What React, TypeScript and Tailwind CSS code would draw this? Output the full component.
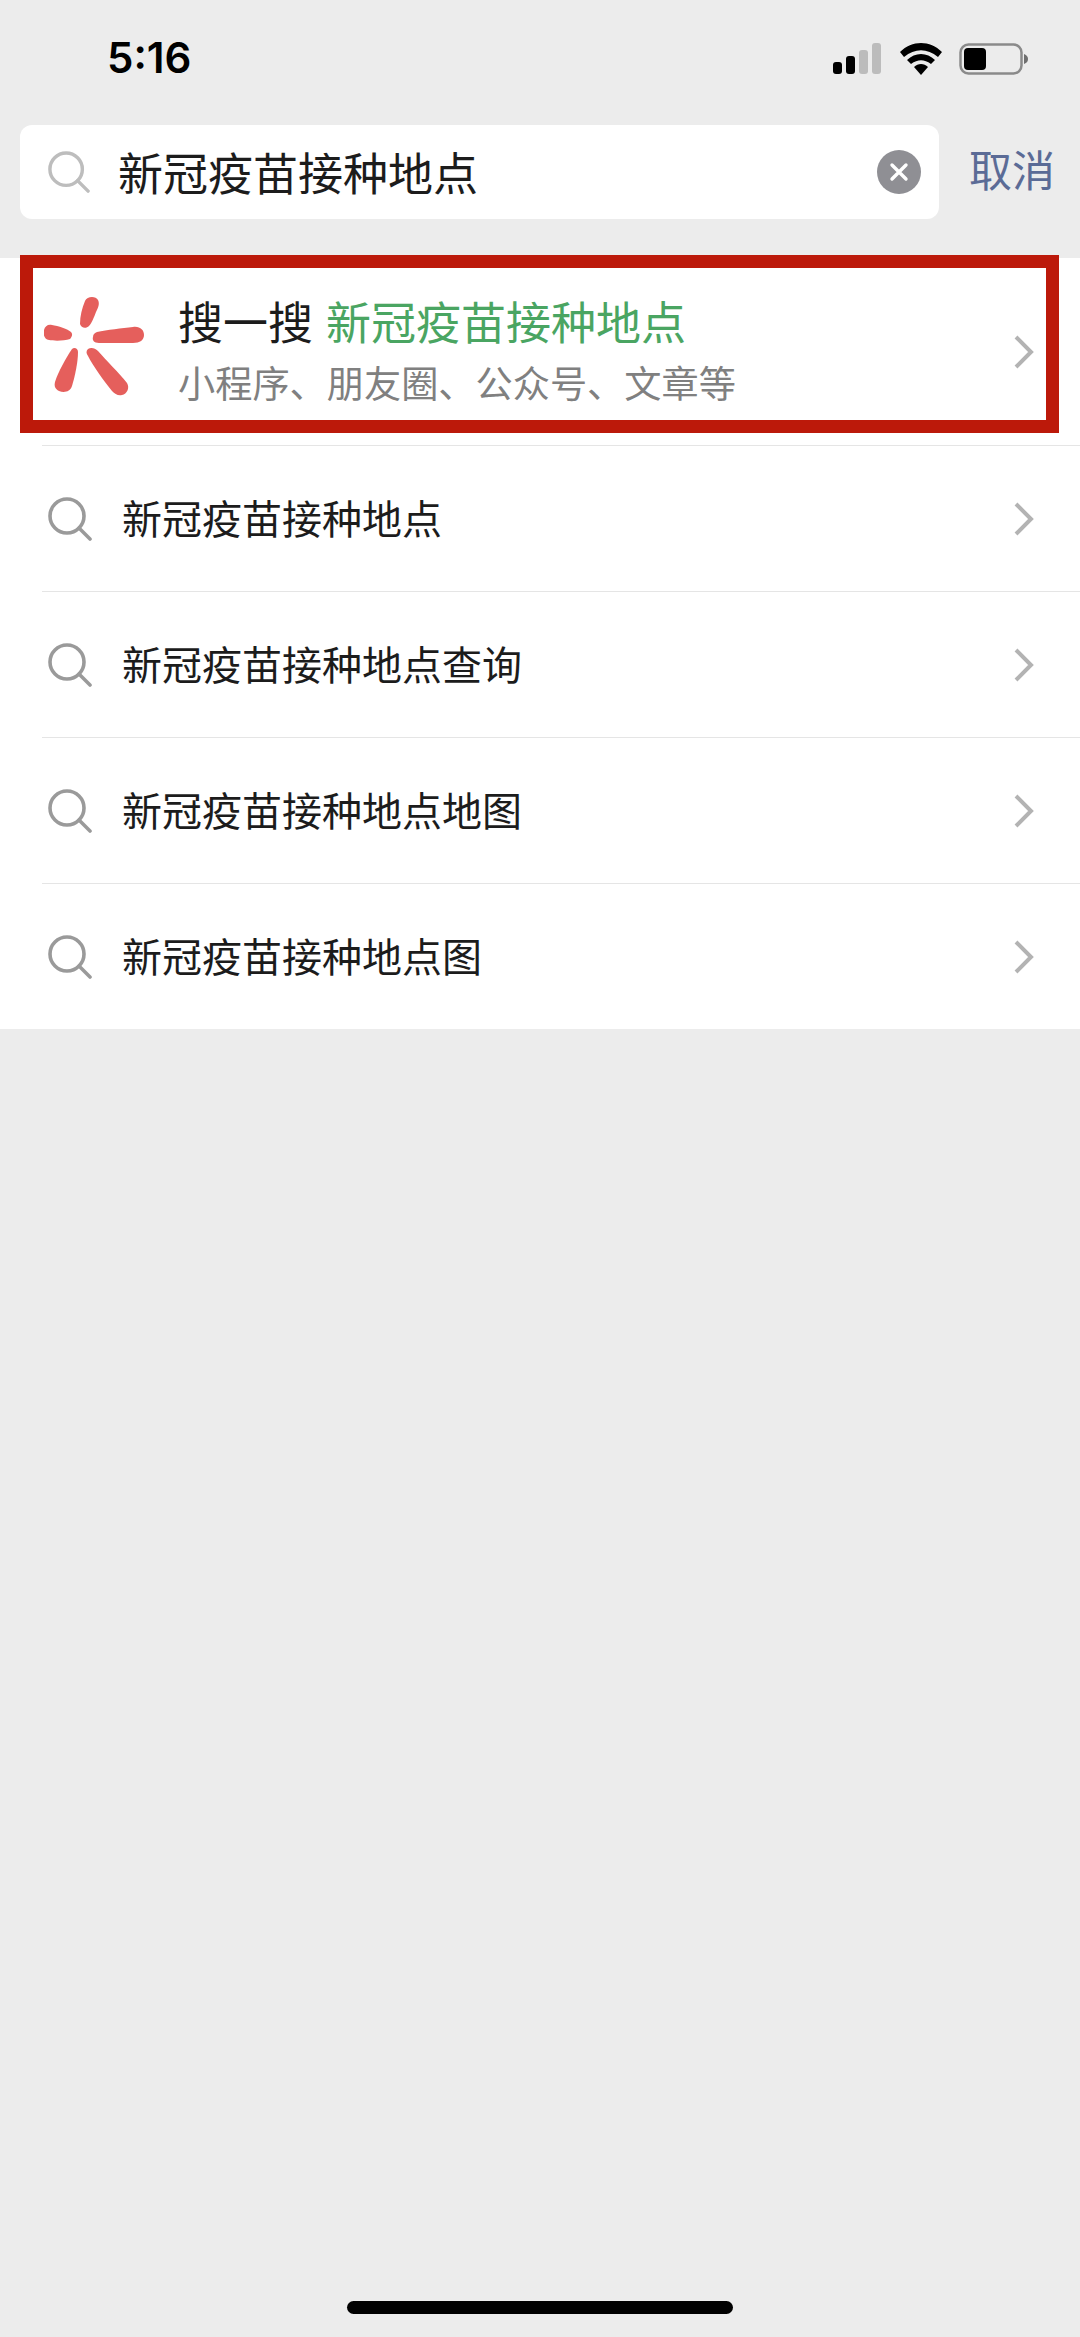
import React from 'react';

const FONT = 'font-["Noto_Sans_CJK_SC","Noto_Sans",sans-serif]';

const suggestions = ['新冠疫苗接种地点', '新冠疫苗接种地点查询', '新冠疫苗接种地点地图', '新冠疫苗接种地点图'];

const SearchIcon = ({ className, color }: { className: string; color: string }) => (
  <svg viewBox="0 0 44 44" className={className} fill="none" stroke={color}>
    <circle cx="19" cy="19" r="17" strokeWidth="3.6" />
    <path d="M31 31 L42 42" strokeWidth="3.6" strokeLinecap="round" />
  </svg>
);

const Chevron = () => (
  <svg viewBox="0 0 20 34" className="h-[34px] w-[20px]" fill="none" stroke="#b3b3b3" strokeWidth="4">
    <path d="M2 2 L17 17 L2 32" />
  </svg>
);

const Logo = () => (
  <svg viewBox="0 0 100 100" className="h-[100px] w-[100px]" fill="#e55f5c">
    <path d="M41 5 C43 0 52 0 54 4 C56 8 54 12 52 16 C50 21 48 27 45 30 C42 33 37 32 36 28 C36 20 38 12 41 5 Z" />
    <path d="M8 29 C14 30 24 33 27 36 C29 38 28 41 26 43 C20 45 10 45 5 44 C0 43 -1 38 0 34 C1 30 4 28 8 29 Z" />
    <path d="M53 36 C63 34 78 32 89 31 C96 30 100 34 100 39 C100 44 96 47 89 47 L55 47 C50 47 48 44 49 41 C49 38 51 37 53 36 Z" />
    <path d="M28 53 C30 51 34 52 34 56 C34 66 31 80 28 90 C26 96 20 97 15 95 C11 93 10 90 11 86 C14 76 22 62 28 53 Z" />
    <path d="M44 53 C47 51 51 52 54 55 C62 64 75 77 83 87 C86 92 83 98 78 99 C74 100 71 98 68 95 C60 85 49 70 44 60 C42 57 42 55 44 53 Z" />
  </svg>
);

export default function App() {
  return (
    <div className={`${FONT} relative h-[2337px] w-[1080px] overflow-hidden bg-[#ececec]`}>
      {/* status bar */}
      <div className="flex h-[125px] items-start justify-between pt-[34px] pl-[107px] pr-[51px]">
        <span className={'font-["Inter",sans-serif] text-[42px] leading-[48px] font-semibold text-black'}>5:16</span>
        <div className="mt-[9px] flex items-center">
          <svg viewBox="0 0 50 32" className="h-[32px] w-[50px]">
            <rect x="0" y="19" width="9" height="12" rx="3" fill="#000" />
            <rect x="13" y="13" width="9" height="18" rx="3" fill="#000" />
            <rect x="26" y="7" width="9" height="24" rx="3" fill="#bcbcbc" />
            <rect x="39" y="0" width="9" height="31" rx="3" fill="#bcbcbc" />
          </svg>
          <svg viewBox="0 0 42 32" className="ml-[17px] h-[32px] w-[42px]">
            <path d="M0 9 C12 -3 30 -3 42 9 L38 14 C27 5 15 5 4 14 Z" fill="#000" />
            <path d="M7 17 C15 9 27 9 35 17 L31 21 C24 16 18 16 11 21 Z" fill="#000" />
            <path d="M14 24 C18 20 24 20 28 24 L21 32 Z" fill="#000" />
          </svg>
          <svg viewBox="0 0 70 32" className="ml-[17px] h-[32px] w-[70px]">
            <rect x="1.5" y="1.5" width="61" height="29" rx="8" fill="none" stroke="#8a8a8a" strokeWidth="2.5" />
            <rect x="5" y="5" width="22" height="22" rx="4" fill="#000" />
            <path d="M65 11 C68 12 69 14 69 16 C69 18 68 20 65 21 Z" fill="#6f6f6f" />
          </svg>
        </div>
      </div>

      {/* search bar */}
      <div className="flex h-[133px] items-start pl-[20px]">
        <div className="flex h-[94px] w-[919px] items-center rounded-[12px] bg-white pl-[28px] pr-[18px]">
          <SearchIcon className="h-[42px] w-[42px]" color="#bdbdbd" />
          <span className="ml-[28px] flex-1 pb-[2px] text-[45px] leading-none text-[#1c1c1c]">新冠疫苗接种地点</span>
          <div className="flex h-[44px] w-[44px] items-center justify-center rounded-full bg-[#8f8f94]">
            <svg viewBox="0 0 20 20" className="h-[20px] w-[20px]" stroke="#fff" strokeWidth="3.4" strokeLinecap="round">
              <path d="M3 3 L17 17 M17 3 L3 17" />
            </svg>
          </div>
        </div>
        <span className="ml-[30px] shrink-0 whitespace-nowrap pt-[16px] text-[43px] leading-[54px] text-[#5b6b96]">取消</span>
      </div>

      {/* list */}
      <div className="bg-white">
        <div className="flex h-[187px] items-center pl-[44px] pr-[46px]">
          <div className="mt-[-12px]">
            <Logo />
          </div>
          <div className="ml-[34px] flex-1 pb-[6px]">
            <div className="text-[45px] leading-[58px] text-[#1c1c1c]">
              搜一搜 <span className="ml-[3px] text-[#4aa562]">新冠疫苗接种地点</span>
            </div>
            <div className="mt-[9px] text-[37.2px] leading-[46px] text-[#808080]">小程序、朋友圈、公众号、文章等</div>
          </div>
          <Chevron />
        </div>
        {suggestions.map((text) => (
          <div key={text} className="ml-[42px] flex h-[146px] items-center border-t border-[#e5e5e5] pr-[46px]">
            <SearchIcon className="ml-[6px] h-[44px] w-[44px]" color="#9a9a9a" />
            <span className="ml-[30px] flex-1 pb-[3px] text-[40px] leading-none text-[#1c1c1c]">{text}</span>
            <Chevron />
          </div>
        ))}
      </div>

      {/* red highlight drawn over the first row */}
      <div className="absolute top-[255px] left-[20px] h-[178px] w-[1039px] border-[13px] border-[#bc190a]" />

      {/* home indicator */}
      <div className="absolute bottom-[23px] left-[347px] h-[13px] w-[386px] rounded-full bg-black" />
    </div>
  );
}
